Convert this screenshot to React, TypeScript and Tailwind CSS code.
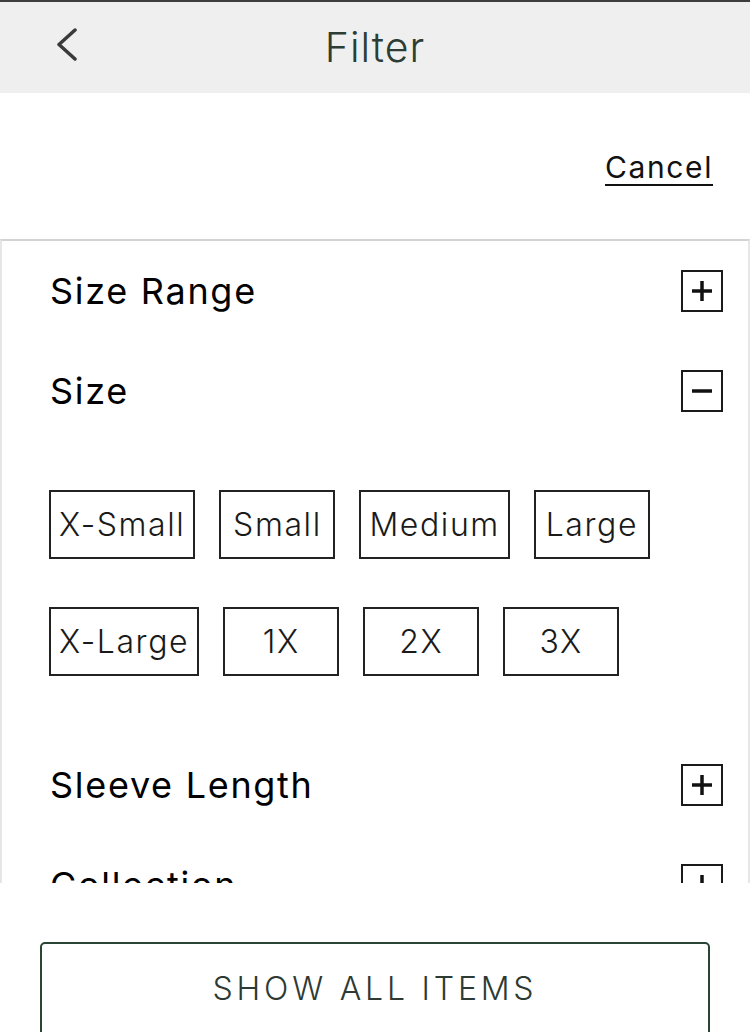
import React from "react";

const font = { fontFamily: "Inter, 'Noto Sans', sans-serif" };

function PlusBox() {
  return (
    <div className="w-[42px] h-[42px] border-2 border-[#1a1a1a] flex items-center justify-center shrink-0">
      <svg width="22" height="22" viewBox="0 0 22 22">
        <line x1="1" y1="11" x2="21" y2="11" stroke="#111" strokeWidth="3.5" />
        <line x1="11" y1="1" x2="11" y2="21" stroke="#111" strokeWidth="3.5" />
      </svg>
    </div>
  );
}

function MinusBox() {
  return (
    <div className="w-[42px] h-[42px] border-2 border-[#1a1a1a] flex items-center justify-center shrink-0">
      <svg width="22" height="22" viewBox="0 0 22 22">
        <line x1="1" y1="11" x2="21" y2="11" stroke="#111" strokeWidth="3.5" />
      </svg>
    </div>
  );
}

function Row({ label, open }: { label: string; open?: boolean }) {
  return (
    <div className="h-[100px] shrink-0 flex items-center justify-between pl-[48px] pr-[25px]">
      <span className="text-[36px] font-normal text-black tracking-[1.7px] leading-none">{label}</span>
      {open ? <MinusBox /> : <PlusBox />}
    </div>
  );
}

function Chip({ label }: { label: string }) {
  return (
    <div className="h-[69px] min-w-[116px] px-[8px] border-2 border-[#222] flex items-center justify-center text-[32px] text-[#1a1a1a] tracking-[1.6px] leading-none font-light">
      {label}
    </div>
  );
}

export default function App() {
  return (
    <div className="w-[750px] h-[1032px] bg-white overflow-hidden flex flex-col" style={font}>
      <div className="h-[2px] bg-[#3d3d3d] shrink-0" />
      <div className="h-[91px] bg-[#efefef] grid grid-cols-[1fr_auto_1fr] shrink-0">
        <div className="pl-[55px] pt-[26px]">
          <svg width="22" height="33" viewBox="0 0 22 33">
            <polyline
              points="20,2 4,16.5 20,31"
              fill="none"
              stroke="#3a3a3a"
              strokeWidth="3.5"
              strokeLinecap="round"
              strokeLinejoin="round"
            />
          </svg>
        </div>
        <div className="flex items-center pb-[2px]">
          <span className="text-[41px] font-light text-[#2c3d33] leading-[50px] tracking-[1px]">Filter</span>
        </div>
        <div />
      </div>
      <div className="h-[146px] shrink-0 flex justify-end pr-[37px] pt-[56px]">
        <span className="text-[30px] text-[#111] leading-[36px] tracking-[1.6px] underline decoration-2 underline-offset-[6px] h-fit">
          Cancel
        </span>
      </div>
      <div className="h-[644px] shrink-0 border-t-2 border-t-[#d3d3d3] border-x-2 border-x-[#e6e6e6] overflow-hidden flex flex-col">
        <Row label="Size Range" />
        <Row label="Size" open />
        <div className="pl-[47px] pt-[49px] pb-[59px] flex flex-col gap-[48px] shrink-0">
          <div className="flex gap-[24px]">
            <Chip label="X-Small" />
            <Chip label="Small" />
            <Chip label="Medium" />
            <Chip label="Large" />
          </div>
          <div className="flex gap-[24px]">
            <Chip label="X-Large" />
            <Chip label="1X" />
            <Chip label="2X" />
            <Chip label="3X" />
          </div>
        </div>
        <Row label="Sleeve Length" />
        <Row label="Collection" />
      </div>
      <div className="h-[149px] shrink-0 pt-[59px] px-[40px]">
        <div className="h-[94px] border-2 border-[#2a4535] rounded-[5px] flex items-center justify-center">
          <span className="text-[32px] font-light text-[#2d3a33] tracking-[3.8px] leading-none">SHOW ALL ITEMS</span>
        </div>
      </div>
    </div>
  );
}
